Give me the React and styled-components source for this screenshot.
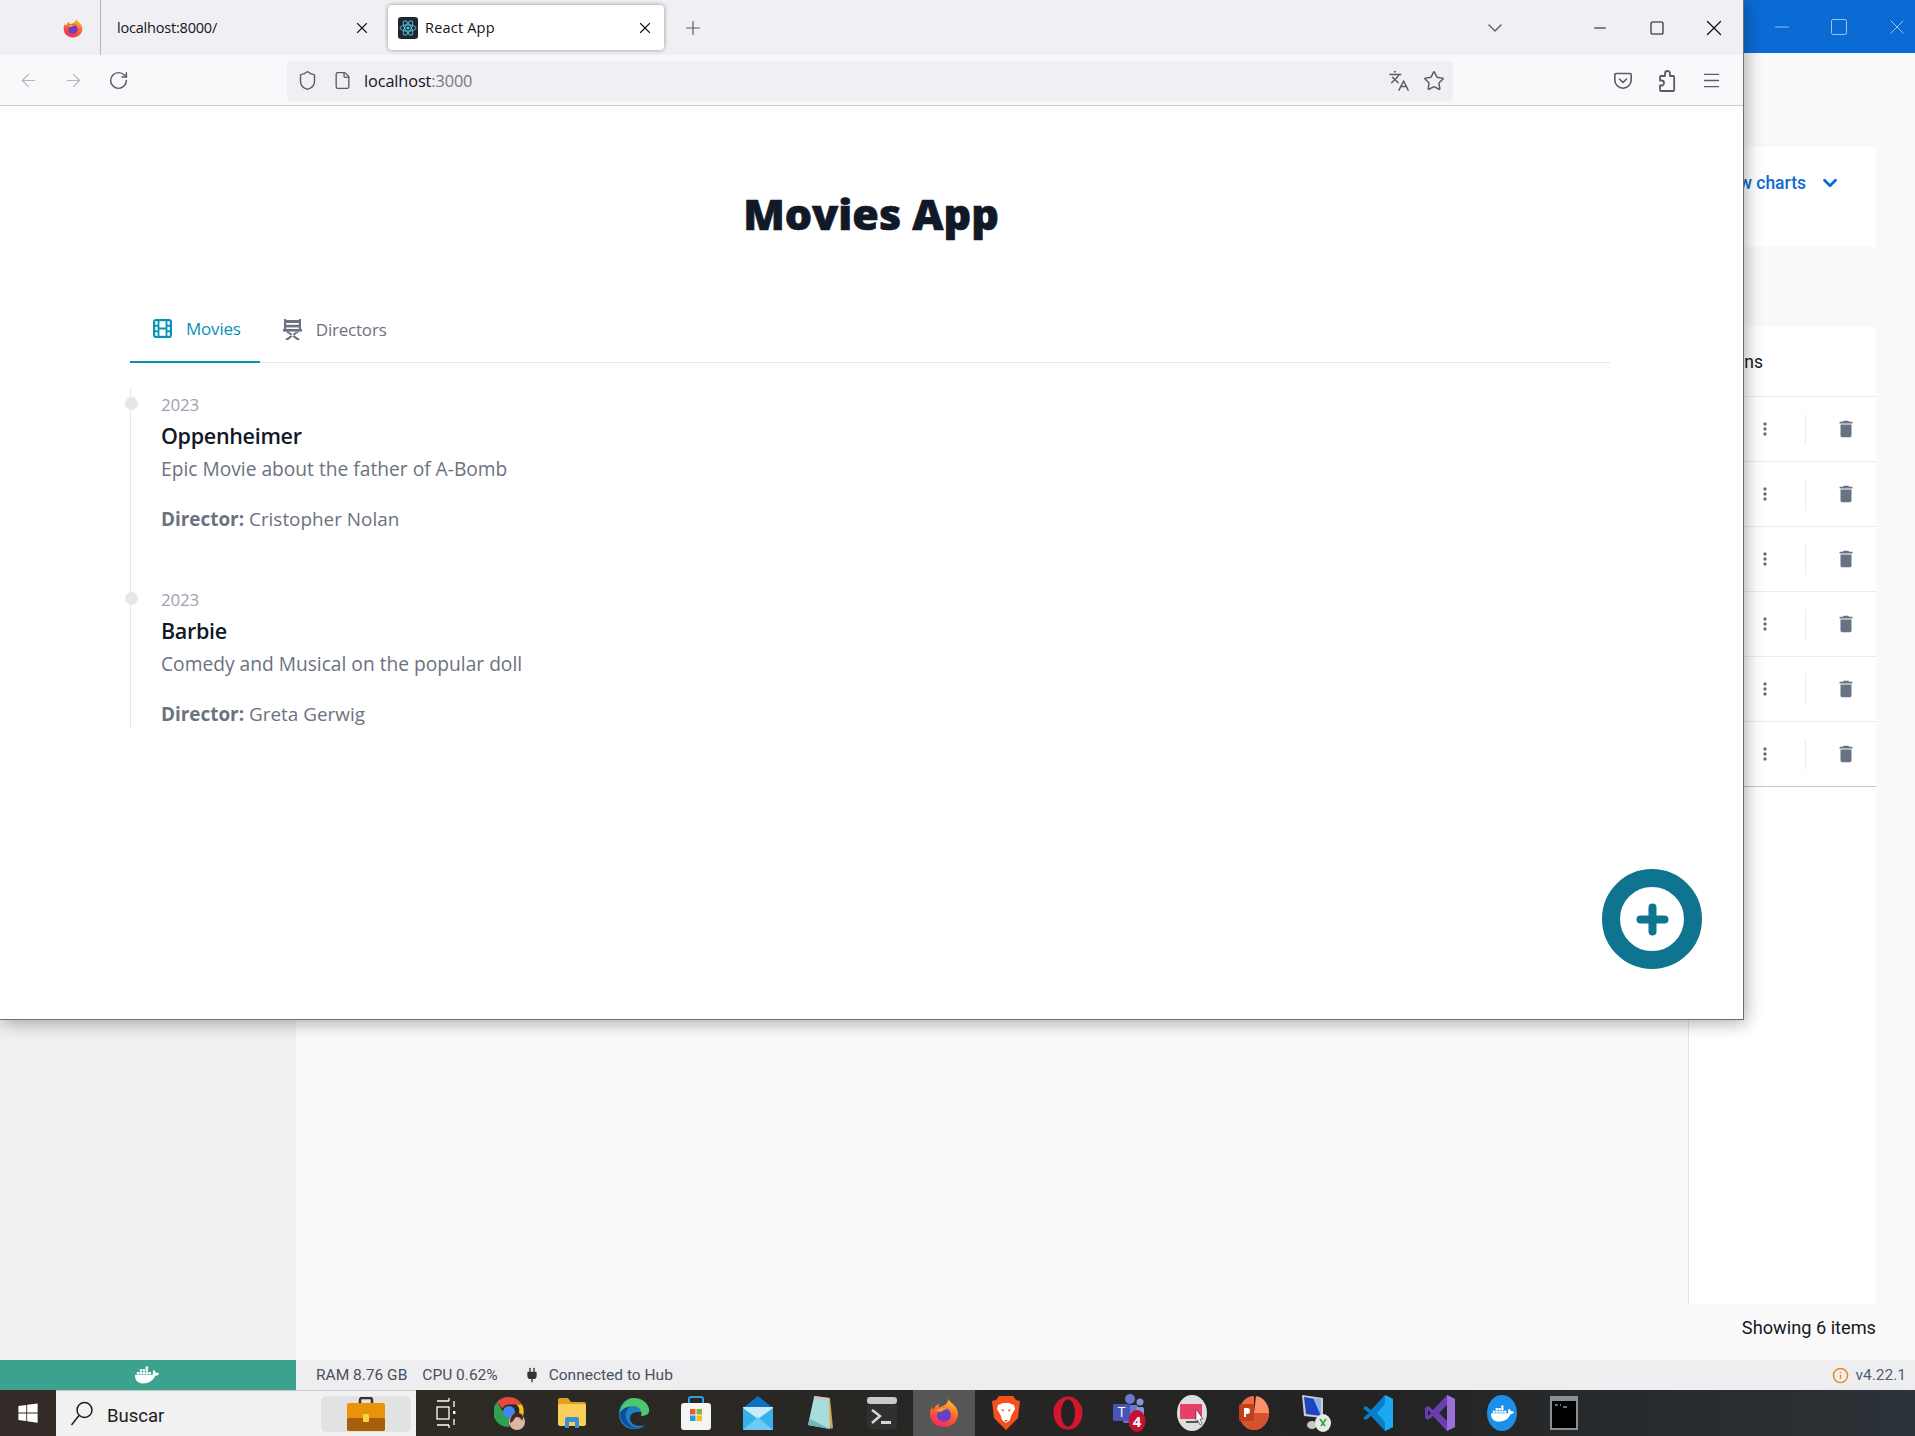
import React from 'react';
import styled, { createGlobalStyle } from 'styled-components';
import {
  X, Plus, ArrowLeft, ArrowRight, RotateCw, Shield, File, Languages, Star, Menu,
  ChevronDown, Minus, Square, Info, Plug
} from 'lucide-react';
import { FaDocker, FaWindows } from 'react-icons/fa';
import { MdDelete, MdMoreVert } from 'react-icons/md';

const Global = createGlobalStyle`
  html, body { margin: 0; padding: 0; background: #f9f9f9; }
  * { box-sizing: border-box; }
`

const Desktop = styled.div`
  position: relative;
  width: 1915px;
  height: 1436px;
  overflow: hidden;
  display: flex;
  flex-direction: column;
  font-family: Roboto, "Liberation Sans", sans-serif;
`

/* docker desktop, mostly hidden behind the browser */
const DockerTitle = styled.div`
  height: 53px;
  flex: none;
  background: #0b6bd4;
  display: flex;
  justify-content: flex-end;
  align-items: center;
  gap: 36px;
  padding-right: 6px;
  color: #9cc4f0;
`
const DockerBody = styled.div`
  flex: 1;
  min-height: 0;
  display: grid;
  grid-template-columns: 296px 1fr;
`
const Sidebar = styled.div`
  background: #f0f0f2;
`
const Main = styled.div`
  background: #f9f9f9;
  padding: 94px 39px 0 0;
  display: flex;
  flex-direction: column;
`
const ChartsCard = styled.div`
  height: 100px;
  flex: none;
  background: #fff;
  display: flex;
  justify-content: flex-end;
  align-items: center;
  gap: 13px;
  padding: 0 35px 29px 0;
  color: #0b6bd4;
  font-size: 17.5px;
  font-weight: 500;
`
const ListPanel = styled.div`
  margin-top: 80px;
  margin-left: auto;
  width: 188px;
  flex: 1;
  background: #fff;
  border-left: 1px solid #e2e2e2;
`
const ListHead = styled.div`
  height: 70px;
  border-bottom: 1px solid #ececec;
  display: flex;
  justify-content: flex-end;
  align-items: center;
  padding-right: 113px;
  font-size: 17.5px;
  color: #14181f;
`
const ListRow = styled.div`
  height: 65px;
  border-bottom: 1px solid ${(props) => (props.$last ? '#c4c4c4' : '#ececec')};
  display: flex;
  justify-content: flex-end;
  align-items: center;
  color: #677285;
`
const DotsCell = styled.div`
  width: 82px;
  height: 31px;
  border-right: 1px solid #ececec;
  display: flex;
  justify-content: center;
  align-items: center;
`
const TrashCell = styled.div`
  width: 70px;
  padding-left: 10px;
  display: flex;
  justify-content: center;
  align-items: center;
`
const ListFooter = styled.div`
  height: 56px;
  flex: none;
  padding-bottom: 9px;
  display: flex;
  justify-content: flex-end;
  align-items: center;
  font-size: 18.2px;
  color: #14181f;
`

const StatusBar = styled.div`
  height: 30px;
  flex: none;
  background: #eeeef0;
  display: flex;
  align-items: center;
  font-size: 15.5px;
  color: #46505c;
`
const WhaleBox = styled.div`
  width: 296px;
  height: 100%;
  padding-right: 3px;
  background: #3ba28e;
  color: #fff;
  display: flex;
  justify-content: center;
  align-items: center;
  margin-right: 20px;
`
const StatusText = styled.span`
  margin-left: ${(props) => props.$left || 0}px;
  margin-right: ${(props) => props.$gap || 0}px;
`
const Version = styled.div`
  margin-left: auto;
  padding-right: 9px;
  display: flex;
  align-items: center;
  gap: 6px;
  color: #4b5f75;
  font-size: 15.5px;
`

const Taskbar = styled.div`
  height: 46px;
  flex: none;
  background: linear-gradient(90deg, #322b27 0%, #2f2b24 18%, #262524 55%, #232323 72%, #2c3338 100%);
  display: flex;
  align-items: stretch;
`
const StartButton = styled.div`
  width: 56px;
  display: flex;
  justify-content: center;
  align-items: center;
  color: #fff;
`
const SearchBox = styled.div`
  width: 360px;
  background: #f1f1f1;
  border-top: 1px solid #c8c8c8;
  display: flex;
  align-items: center;
  padding-left: 14px;
  font-size: 18.5px;
  color: #1c1c1c;
`
const SearchLabel = styled.span`
  margin-left: 13px;
  padding-top: 4px;
  flex: 1;
`
const BriefcaseBox = styled.div`
  width: 90px;
  height: 36px;
  margin-right: 5px;
  border-radius: 6px;
  background: #e2e2e2;
  display: flex;
  justify-content: center;
  align-items: center;
`
const TaskViewSlot = styled.div`
  width: 63px;
  padding-right: 3px;
  display: flex;
  justify-content: center;
  align-items: center;
`
const TaskSlot = styled.div`
  width: 62px;
  display: flex;
  justify-content: center;
  align-items: center;
  background: ${(props) => (props.$active ? '#565656' : 'transparent')};
`

/* the firefox window floats over the desktop */
const BrowserWindow = styled.div`
  position: absolute;
  left: 0;
  top: 0;
  width: 1744px;
  height: 1020px;
  background: #fff;
  border-right: 1px solid #707070;
  border-bottom: 1px solid #707070;
  box-shadow: 2px 3px 16px rgba(0, 0, 0, 0.32);
  display: flex;
  flex-direction: column;
  font-family: "Open Sans", "Noto Sans", sans-serif;
`
const TabStrip = styled.div`
  height: 55px;
  flex: none;
  background: #f0f0f4;
  display: flex;
  align-items: center;
  color: #15141a;
`
const PinnedTab = styled.div`
  width: 101px;
  height: 100%;
  border-right: 1px solid #b8b8bc;
  display: flex;
  align-items: center;
  justify-content: flex-end;
  padding-right: 17px;
`
const Tab = styled.div`
  width: 276px;
  height: 45px;
  margin: ${(props) => (props.$active ? '0' : '0 11px 0 0')};
  padding: ${(props) => (props.$active ? '0 10px' : '0 6px 0 16px')};
  display: flex;
  align-items: center;
  gap: 7px;
  border-radius: 4px;
  background: ${(props) => (props.$active ? '#fff' : 'transparent')};
  box-shadow: ${(props) => (props.$active ? '0 0 4px rgba(0,0,0,0.4)' : 'none')};
  font-size: 14.5px;
  letter-spacing: ${(props) => (props.$active ? '0.2px' : '-0.2px')};
`
const TabTitle = styled.span`
  flex: 1;
`
const NewTab = styled.div`
  margin-left: 18px;
  display: flex;
  color: #5b5b66;
`
const TabList = styled.div`
  margin-left: auto;
  margin-right: 64px;
  display: flex;
  color: #5b5b66;
`
const WinControls = styled.div`
  display: flex;
  align-items: center;
  padding-right: 1px;
  color: #111;
`
const WinButton = styled.div`
  width: 57px;
  display: flex;
  justify-content: center;
`
const Toolbar = styled.div`
  height: 51px;
  flex: none;
  background: #f9f9fb;
  border-bottom: 1px solid #cbcbcf;
  display: flex;
  align-items: center;
  padding: 1px 21px 0 18px;
  color: #5b5b66;
`
const NavIcons = styled.div`
  width: 269px;
  display: flex;
  align-items: center;
  gap: 24px;
`
const UrlBar = styled.div`
  width: 1166px;
  height: 40px;
  border-radius: 4px;
  background: #f0f0f4;
  display: flex;
  align-items: center;
  padding: 0 8px 0 10px;
`
const PageIcon = styled(File)`
  margin-left: 15px;
`
const UrlText = styled.div`
  margin-left: 12px;
  padding-top: 1px;
  flex: 1;
  font-size: 16.3px;
  letter-spacing: -0.1px;
  color: #15141a;
  span { color: #77777f; }
`
const UrlActions = styled.div`
  display: flex;
  gap: 13px;
  align-items: center;
`
const RightIcons = styled.div`
  margin-left: auto;
  display: flex;
  gap: 24px;
  align-items: center;
`

const Page = styled.div`
  position: relative;
  flex: 1;
  padding: 0 133px 0 130px;
`
const Title = styled.h1`
  margin: 0;
  padding: 78px 0 0 2px;
  text-align: center;
  font-size: 43px;
  line-height: 60px;
  font-weight: 800;
  -webkit-text-stroke: 0.7px #111827;
  color: #111827;
`
const TabsRow = styled.div`
  margin-top: 53px;
  height: 66px;
  display: flex;
  border-bottom: 1.5px solid #e5e7eb;
`
const TabButton = styled.div`
  height: 66px;
  padding: 0 19px 2px 23px;
  display: flex;
  align-items: center;
  gap: 14px;
  font-size: 17px;
  letter-spacing: -0.2px;
  color: ${(props) => (props.$active ? '#0891b2' : '#6b7280')};
  border-bottom: ${(props) => (props.$active ? '2.5px solid #0891b2' : 'none')};
`
const Timeline = styled.ol`
  list-style: none;
  margin: 25px 0 0;
  padding: 0;
  border-left: 1.5px solid #e5e7eb;
`
const Entry = styled.li`
  position: relative;
  padding-left: 30px;
  padding-bottom: ${(props) => (props.$last ? 0 : 49)}px;
  margin-bottom: ${(props) => (props.$last ? -2 : 0)}px;
`
const Dot = styled.span`
  position: absolute;
  left: -6px;
  top: 9px;
  width: 13px;
  height: 13px;
  border-radius: 50%;
  background: #e5e7eb;
`
const Year = styled.div`
  font-size: 17px;
  line-height: 33px;
  color: #9ca3af;
  letter-spacing: -0.2px;
`
const MovieName = styled.h3`
  margin: 0;
  font-size: 21.5px;
  line-height: 30px;
  font-weight: 600;
  color: #111827;
  letter-spacing: -0.3px;
`
const Description = styled.p`
  margin: 0 0 18px;
  font-size: 19.2px;
  line-height: 35px;
  color: #6b7280;
`
const DirectorLine = styled.p`
  margin: 0;
  font-size: 18.9px;
  line-height: 30px;
  color: #6b7280;
  b { font-weight: 700; }
`
const Fab = styled.div`
  position: absolute;
  right: 41px;
  bottom: 50px;
  width: 100px;
  height: 100px;
  border-radius: 50%;
  border: 18px solid #0e7490;
  background: #fff;
  display: flex;
  justify-content: center;
  align-items: center;
  color: #0e7490;
`
const TeamsLabel = styled.text`
  font-family: "Open Sans", sans-serif;
`
const DockerDisc = styled.div`
  width: 30px;
  height: 36px;
  border-radius: 50%;
  background: #1a90e8;
  color: #fff;
  display: flex;
  justify-content: center;
  align-items: center;
`

function FirefoxLogo({ size = 20 }) {
  return (
    <svg width={size} height={size} viewBox="0 0 32 32">
      <defs>
        <linearGradient id="ffBody" x1="0.7" y1="0" x2="0.3" y2="1">
          <stop offset="0" stopColor="#ffc22e" />
          <stop offset="0.45" stopColor="#ff6b2d" />
          <stop offset="1" stopColor="#f3245f" />
        </linearGradient>
      </defs>
      <path d="M21 1c1 3 3 4 5 6 3 3 5 6 5 10 0 8-7 14-15 14S1 25 1 17c0-3 1-6 2-8 0 2 1 3 2 3 1-3 3-5 6-6-1 2-1 3 0 4 3-1 9-3 10-9z" fill="url(#ffBody)" />
      <circle cx="16" cy="18" r="7.5" fill="#6a3fc4" />
      <path d="M8 13c4-3 9-3 12-1-3 0-5 1-6 2-2 1-4 1-6-1z" fill="#ff9f2d" />
    </svg>
  );
}

function ReactFavicon() {
  return (
    <svg width="20" height="22" viewBox="0 0 20 22">
      <rect width="20" height="22" rx="3" fill="#20262e" />
      <g fill="none" stroke="#4fc3d8" strokeWidth="1">
        <ellipse cx="10" cy="11" rx="8" ry="3.2" />
        <ellipse cx="10" cy="11" rx="8" ry="3.2" transform="rotate(60 10 11)" />
        <ellipse cx="10" cy="11" rx="8" ry="3.2" transform="rotate(120 10 11)" />
      </g>
      <circle cx="10" cy="11" r="1.6" fill="#4fc3d8" />
    </svg>
  );
}

function FilmIcon() {
  return (
    <svg width="19" height="19" viewBox="0 0 19 19">
      <rect width="19" height="19" rx="3" fill="#0891b2" />
      <g fill="#fff">
        <rect x="2.2" y="2.2" width="2.4" height="3.6" />
        <rect x="2.2" y="7.7" width="2.4" height="3.6" />
        <rect x="2.2" y="13.2" width="2.4" height="3.6" />
        <rect x="14.4" y="2.2" width="2.4" height="3.6" />
        <rect x="14.4" y="7.7" width="2.4" height="3.6" />
        <rect x="14.4" y="13.2" width="2.4" height="3.6" />
        <rect x="6.400" y="2.2" width="6.200" height="6.300" />
        <rect x="6.400" y="10.500" width="6.200" height="6.300" />
      </g>
    </svg>
  );
}

function ChairIcon() {
  return (
    <svg width="19" height="21" viewBox="0 0 19 21" fill="#6b7280">
      <rect x="1" y="0" width="2.2" height="11" />
      <rect x="15.8" y="0" width="2.2" height="11" />
      <rect x="1" y="1" width="17" height="3" />
      <rect x="1" y="5.8" width="17" height="2.6" />
      <rect x="0" y="10" width="19" height="2.6" />
      <path d="M2.500 12.500h3l11 7.500v1h-2.500zM16.500 12.500h-3l-11 7.500v1h2.500z" />
    </svg>
  );
}

function PocketIcon() {
  return (
    <svg width="20" height="20" viewBox="0 0 20 20" fill="none" stroke="currentColor" strokeWidth="1.6" strokeLinecap="round" strokeLinejoin="round">
      <path d="M3 2.500h14a1.200 1.200 0 0 1 1.200 1.200V9a8.200 8.200 0 0 1-16.400 0V3.700a1.200 1.200 0 0 1 1.200-1.200z" />
      <path d="M6.500 8l3.500 3.500L13.500 8" />
    </svg>
  );
}

function PuzzleIcon() {
  return (
    <svg width="20" height="22" viewBox="0 0 20 22" fill="none" stroke="currentColor" strokeWidth="1.8" strokeLinejoin="round">
      <path d="M8 6V3.500a2.500 2.500 0 0 1 5 0V6h3.200a1 1 0 0 1 1 1v13a1 1 0 0 1-1 1H4a1 1 0 0 1-1-1v-4.500h1.500a2.500 2.500 0 0 0 0-5H3V7a1 1 0 0 1 1-1z" />
    </svg>
  );
}

function SearchGlass() {
  return (
    <svg width="24" height="26" viewBox="0 0 24 26" fill="none" stroke="#1c1c1c" strokeWidth="1.5">
      <circle cx="14.500" cy="9" r="7.500" />
      <path d="M9 14.500L1.500 24" />
    </svg>
  );
}

function TaskViewIcon() {
  return (
    <svg width="20" height="30" viewBox="0 0 20 30" fill="none" stroke="#fff" strokeWidth="1.3">
      <path d="M1 3h12M13 0v3M1 27h12M13 27v3" />
      <rect x="1" y="9" width="12" height="12" />
      <path d="M18 3v6M18 21v6" />
      <rect x="17" y="13" width="2.400" height="3" fill="#fff" stroke="none" />
    </svg>
  );
}

function Briefcase() {
  return (
    <svg width="38" height="34" viewBox="0 0 38 34">
      <path d="M13 8V3a2 2 0 0 1 2-2h8a2 2 0 0 1 2 2v5" fill="none" stroke="#333" strokeWidth="2.500" />
      <rect x="0" y="6" width="38" height="28" rx="2" fill="#e8930a" />
      <rect x="0" y="21" width="38" height="13" rx="2" fill="#a85f0b" />
      <rect x="16" y="17" width="6" height="8" rx="1" fill="#f6d63c" />
    </svg>
  );
}

function TeamsIcon() {
  return (
    <svg width="34" height="38" viewBox="0 0 34 38">
      <circle cx="17" cy="5" r="5" fill="#6d77d0" />
      <circle cx="27" cy="8" r="3.500" fill="#8a92de" />
      <rect x="10" y="11" width="15" height="18" rx="2" fill="#6d77d0" />
      <rect x="23" y="13" width="8" height="14" rx="2" fill="#8a92de" />
      <rect x="0" y="10" width="17" height="17" rx="1.500" fill="#4a54b5" />
      <TeamsLabel x="8.500" y="23" textAnchor="middle" fontSize="14" fill="#fff">T</TeamsLabel>
      <ellipse cx="24" cy="27" rx="8.500" ry="11" fill="#c8102e" />
      <TeamsLabel x="24" y="33" textAnchor="middle" fontSize="15" fontWeight="700" fill="#fff">4</TeamsLabel>
    </svg>
  );
}

const taskIcons = [
  <svg key="chrome" width="32" height="34" viewBox="0 0 32 34">
    <path d="M15 1a15 15 0 0 1 13 7.500H15a7 7 0 0 0-6.500 4L3 6a15 15 0 0 1 12-5z" fill="#e5493a" />
    <path d="M28 8.500a15 15 0 0 1-12 22l6-10a7 7 0 0 0 0-12z" fill="#f6c21c" />
    <path d="M3 6l7 11a7 7 0 0 0 7 5l-2 9A15 15 0 0 1 3 6z" fill="#2fa04f" />
    <circle cx="15" cy="16" r="6" fill="#4086f4" />
    <circle cx="23" cy="26" r="8" fill="#d9b9a4" />
    <path d="M16 27c0-9 5-10 8-10 5 0 6 4 4 8-1-3-3-4-5-4-3 0-3 5-7 6z" fill="#4a2a1d" />
  </svg>,
  <svg key="explorer" width="28" height="32" viewBox="0 0 28 32">
    <path d="M0 3a2 2 0 0 1 2-2h8l3 4h13a2 2 0 0 1 2 2v3H0z" fill="#e2a01f" />
    <rect x="0" y="7" width="28" height="22" rx="2" fill="#f8cf5a" />
    <path d="M7 31V22a2 2 0 0 1 2-2h10a2 2 0 0 1 2 2v9h-4v-6h-6v6z" fill="#3b91d8" />
  </svg>,
  <svg key="edge" width="32" height="33" viewBox="0 0 32 33">
    <path d="M16 1C7 1 1 8 1 17c0 9 7 15 14 15 5 0 9-1 12-4-8 3-15-1-15-7 0-4 4-6 8-6 6 0 10 2 11-2C31 6 24 1 16 1z" fill="#1f7fc4" />
    <path d="M16 1c7 0 13 4 15 11 1 5-3 7-8 7 2-6-3-10-8-10-6 0-11 3-13 7C3 8 8 1 16 1z" fill="#4fc66a" />
    <path d="M2 16c2-4 6-6 10-6-4 3-5 7-4 11 1 5 5 9 12 10-9 2-18-5-18-15z" fill="#0c4f9e" />
  </svg>,
  <svg key="store" width="30" height="34" viewBox="0 0 30 34">
    <path d="M8 8V3a2 2 0 0 1 2-2h10a2 2 0 0 1 2 2v5" fill="none" stroke="#2aa0e6" strokeWidth="2" />
    <rect x="0" y="7" width="30" height="27" rx="3" fill="#f4f4f4" />
    <rect x="9" y="13" width="5.500" height="5.500" fill="#ee5a30" />
    <rect x="15.500" y="13" width="5.500" height="5.500" fill="#7dba2c" />
    <rect x="9" y="19.500" width="5.500" height="5.500" fill="#1d9fe8" />
    <rect x="15.500" y="19.500" width="5.500" height="5.500" fill="#f6b91e" />
  </svg>,
  <svg key="mail" width="30" height="34" viewBox="0 0 30 34">
    <path d="M15 0L0 12v22h30V12z" fill="#1070c0" />
    <path d="M0 12h30v22H0z" fill="#38b0ea" />
    <path d="M0 12l15 11 15-11v-1H0z" fill="#c9ecfb" />
    <path d="M0 34l15-13 15 13z" fill="#6ccaf4" />
  </svg>,
  <svg key="notepad" width="28" height="36" viewBox="0 0 28 36">
    <path d="M8 1l16 2 3 30-2 1z" fill="#d2a64a" />
    <path d="M8 2l15 2 1 30L2 30z" fill="#a9dcdd" />
    <path d="M4 24l20 10L2 30z" fill="#6cb7bd" />
    <path d="M8 1l15 2v3L8 4z" fill="#c9c9c9" />
  </svg>,
  <svg key="terminal" width="30" height="32" viewBox="0 0 30 32">
    <rect width="30" height="32" rx="3" fill="#303030" />
    <rect width="30" height="7" rx="3" fill="#c9c9c9" />
    <path d="M5 13l8 6-8 7" fill="none" stroke="#d6d6d6" strokeWidth="2.500" />
    <rect x="14" y="24" width="10" height="3" fill="#d6d6d6" />
  </svg>,
  <FirefoxLogo key="firefox" size={30} />,
  <svg key="brave" width="28" height="34" viewBox="0 0 28 34">
    <path d="M7 0h14l3 4 4 1-2 17-12 12L2 22 0 5l4-1z" fill="#f4511e" />
    <path d="M6 9l5-2h6l5 2 1 4-4 7-1 4-4 3-4-3-1-4-4-7z" fill="#fff" />
    <path d="M9 13l3 1-1 2zM19 13l-3 1 1 2zM12 24h4l-2 2z" fill="#f4511e" />
  </svg>,
  <svg key="opera" width="30" height="34" viewBox="0 0 30 34">
    <ellipse cx="15" cy="17" rx="14.500" ry="16.500" fill="#d3162c" />
    <ellipse cx="15" cy="17" rx="7" ry="13.500" fill="#232323" />
  </svg>,
  <TeamsIcon key="teams" />,
  <svg key="screen" width="30" height="36" viewBox="0 0 30 36">
    <ellipse cx="15" cy="18" rx="15" ry="18" fill="#dedede" />
    <rect x="3" y="9" width="22" height="15" rx="1" fill="#e83f68" />
    <rect x="9" y="26" width="12" height="2" fill="#555" />
    <path d="M19 14l7 10-3 0 2 5-2 1-2-5-2 2z" fill="#fff" stroke="#333" strokeWidth="0.600" />
  </svg>,
  <svg key="ppt" width="30" height="34" viewBox="0 0 30 34">
    <path d="M17 0a15 17 0 0 1 13 17H15z" fill="#ff8f6b" />
    <path d="M15 0a15 17 0 0 0 0 34 15 17 0 0 0 15-17H15z" fill="#ed6c47" />
    <path d="M15 17h15a15 17 0 0 1-15 17 15 17 0 0 1-13-9z" fill="#d35230" />
    <rect x="0" y="8" width="15" height="17" rx="1.500" fill="#c43e1c" />
    <path d="M5 21V12h3a3 3 0 0 1 0 6H7v3z" fill="#fff" />
  </svg>,
  <svg key="rdp" width="30" height="38" viewBox="0 0 30 38">
    <path d="M1 1l21 3v20L3 22z" fill="#c9ccd2" />
    <path d="M3 3l17 3v16L5 20z" fill="#1c45c4" />
    <path d="M12 4l8 2v16z" fill="#8fb1ee" />
    <ellipse cx="11" cy="31" rx="5" ry="4" fill="#c8c8c8" />
    <ellipse cx="22" cy="29" rx="8" ry="9" fill="#e8e8e8" />
    <path d="M19 25l5 7M25 25l-5 7" stroke="#39a83b" strokeWidth="1.800" />
  </svg>,
  <svg key="vscode" width="30" height="36" viewBox="0 0 30 36">
    <path d="M22 0l8 4v28l-8 4L8 21l-5 4-3-2 6-5-6-5 3-2 5 4z" fill="#0a7fc9" />
    <path d="M22 0l8 4v28l-8 4zM22 9l-8 9 8 9z" fill="#1ba9ef" fillRule="evenodd" />
  </svg>,
  <svg key="vs" width="30" height="36" viewBox="0 0 30 36">
    <path d="M22 0l8 4v28l-8 4L8 21l-5 4-3-2V13l3-2 5 4zM3 15v6l3-3zM22 10l-8 8 8 8z" fill="#6b3eb0" fillRule="evenodd" />
    <path d="M22 0l8 4v28l-8 4V26V10z" fill="#9a6fd8" />
  </svg>,
  <DockerDisc key="docker"><FaDocker size={23} /></DockerDisc>,
  <svg key="cmd" width="28" height="34" viewBox="0 0 28 34">
    <rect width="28" height="34" fill="#8a8f94" />
    <rect x="2" y="5" width="24" height="27" fill="#000" />
    <path d="M5 9h3M10 9h1M13 11h4" stroke="#ddd" strokeWidth="1" />
  </svg>
];

const movies = [
  { name: 'Oppenheimer', description: 'Epic Movie about the father of A-Bomb', director: 'Cristopher Nolan' },
  { name: 'Barbie', description: 'Comedy and Musical on the popular doll', director: 'Greta Gerwig' }
];

export default function App() {
  return (
    <Desktop>
      <Global />
      <DockerTitle>
        <Minus size={22} strokeWidth={1} />
        <Square size={20} strokeWidth={1.2} />
        <X size={24} strokeWidth={1} />
      </DockerTitle>
      <DockerBody>
        <Sidebar />
        <Main>
          <ChartsCard>
            <span>View charts</span>
            <ChevronDown size={22} strokeWidth={3} />
          </ChartsCard>
          <ListPanel>
            <ListHead>Actions</ListHead>
            {[0, 1, 2, 3, 4, 5].map((i) => (
              <ListRow key={i} $last={i === 5}>
                <DotsCell><MdMoreVert size={20} /></DotsCell>
                <TrashCell><MdDelete size={22} /></TrashCell>
              </ListRow>
            ))}
          </ListPanel>
          <ListFooter>Showing 6 items</ListFooter>
        </Main>
      </DockerBody>
      <StatusBar>
        <WhaleBox><FaDocker size={24} /></WhaleBox>
        <StatusText $gap={15}>RAM 8.76 GB</StatusText>
        <StatusText $gap={26}>CPU 0.62%</StatusText>
        <Plug size={16} fill="#333" color="#333" />
        <StatusText $left={9}>Connected to Hub</StatusText>
        <Version>
          <Info size={17} color="#e8891c" />
          v4.22.1
        </Version>
      </StatusBar>
      <Taskbar>
        <StartButton><FaWindows size={22} /></StartButton>
        <SearchBox>
          <SearchGlass />
          <SearchLabel>Buscar</SearchLabel>
          <BriefcaseBox><Briefcase /></BriefcaseBox>
        </SearchBox>
        <TaskViewSlot><TaskViewIcon /></TaskViewSlot>
        {taskIcons.map((icon, i) => (
          <TaskSlot key={i} $active={i === 7}>{icon}</TaskSlot>
        ))}
      </Taskbar>

      <BrowserWindow>
        <TabStrip>
          <PinnedTab><FirefoxLogo /></PinnedTab>
          <Tab>
            <TabTitle>localhost:8000/</TabTitle>
            <X size={18} strokeWidth={1.5} />
          </Tab>
          <Tab $active>
            <ReactFavicon />
            <TabTitle>React App</TabTitle>
            <X size={18} strokeWidth={1.5} />
          </Tab>
          <NewTab><Plus size={22} strokeWidth={1.3} /></NewTab>
          <TabList><ChevronDown size={24} strokeWidth={1.4} /></TabList>
          <WinControls>
            <WinButton><Minus size={18} strokeWidth={1.6} /></WinButton>
            <WinButton><Square size={16} strokeWidth={1.6} /></WinButton>
            <WinButton><X size={26} strokeWidth={1.2} /></WinButton>
          </WinControls>
        </TabStrip>
        <Toolbar>
          <NavIcons>
            <ArrowLeft size={21} strokeWidth={1.4} color="#b5b5bb" />
            <ArrowRight size={21} strokeWidth={1.4} color="#b5b5bb" />
            <RotateCw size={21} strokeWidth={1.7} />
          </NavIcons>
          <UrlBar>
            <Shield size={21} strokeWidth={1.6} />
            <PageIcon size={19} strokeWidth={1.7} />
            <UrlText>localhost<span>:3000</span></UrlText>
            <UrlActions>
              <Languages size={22} strokeWidth={1.6} />
              <Star size={22} strokeWidth={1.6} />
            </UrlActions>
          </UrlBar>
          <RightIcons>
            <PocketIcon />
            <PuzzleIcon />
            <Menu size={21} strokeWidth={1.5} />
          </RightIcons>
        </Toolbar>
        <Page>
          <Title>Movies App</Title>
          <TabsRow>
            <TabButton $active><FilmIcon />Movies</TabButton>
            <TabButton><ChairIcon />Directors</TabButton>
          </TabsRow>
          <Timeline>
            {movies.map((movie, i) => (
              <Entry key={movie.name} $last={i === movies.length - 1}>
                <Dot />
                <Year>2023</Year>
                <MovieName>{movie.name}</MovieName>
                <Description>{movie.description}</Description>
                <DirectorLine><b>Director:</b> {movie.director}</DirectorLine>
              </Entry>
            ))}
          </Timeline>
          <Fab><Plus size={41} strokeWidth={4.7} /></Fab>
        </Page>
      </BrowserWindow>
    </Desktop>
  );
}
